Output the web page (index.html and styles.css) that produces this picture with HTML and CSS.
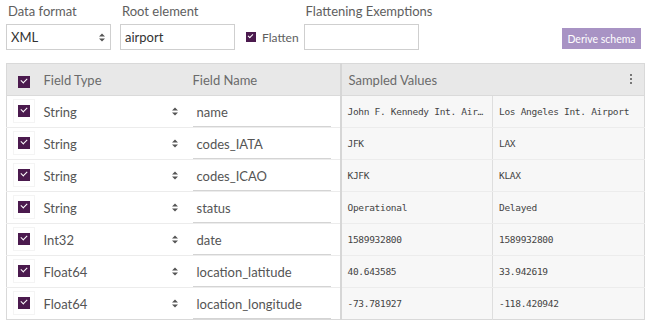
FILE: index.html
```html
<!DOCTYPE html>
<html lang="en">
<head>
    <meta charset="UTF-8">
    <title>Schema</title>
    <link rel="stylesheet" href="styles.css">
</head>
<body>
    <div class="toolbar">
        <div class="field">
            <label>Data format</label>
            <div class="select-box">
                <span>XML</span>
                <svg class="arrows" width="6" height="9" viewBox="0 0 6 9"><path d="M0 3.5L3 0.5L6 3.5Z M0 5.5L3 8.5L6 5.5Z" fill="#555"/></svg>
            </div>
        </div>
        <div class="field">
            <label>Root element</label>
            <div class="text-box">airport</div>
        </div>
        <div class="flatten">
            <span class="cb small"></span>
            <span>Flatten</span>
        </div>
        <div class="field">
            <label>Flattening Exemptions</label>
            <div class="text-box"></div>
        </div>
        <button class="derive-btn">Derive schema</button>
    </div>

    <table class="schema">
        <colgroup>
            <col class="c-check">
            <col class="c-type">
            <col class="c-name">
            <col class="c-sample">
            <col class="c-sample">
        </colgroup>
        <thead>
            <tr>
                <th class="check"><span class="cb"></span></th>
                <th>Field Type</th>
                <th>Field Name</th>
                <th colspan="2" class="samples-head">Sampled Values<span class="kebab"><i></i><i></i><i></i></span></th>
            </tr>
        </thead>
        <tbody id="rows"></tbody>
    </table>

    <script>
        var fields = [
            ['String', 'name', 'John F. Kennedy Int. Air\u2026', 'Los Angeles Int. Airport'],
            ['String', 'codes_IATA', 'JFK', 'LAX'],
            ['String', 'codes_ICAO', 'KJFK', 'KLAX'],
            ['String', 'status', 'Operational', 'Delayed'],
            ['Int32', 'date', '1589932800', '1589932800'],
            ['Float64', 'location_latitude', '40.643585', '33.942619'],
            ['Float64', 'location_longitude', '-73.781927', '-118.420942']
        ];
        var arrows = '<svg class="arrows" width="6" height="9" viewBox="0 0 6 9"><path d="M0 3.5L3 0.5L6 3.5Z M0 5.5L3 8.5L6 5.5Z" fill="#555"/></svg>';
        var html = '';
        fields.forEach(function(f) {
            html += '<tr>' +
                '<td class="check"><span class="cb-wrap"><span class="cb"></span></span></td>' +
                '<td class="type"><div class="type-sel"><span>' + f[0] + '</span>' + arrows + '</div></td>' +
                '<td class="name"><div class="name-input">' + f[1] + '</div></td>' +
                '<td class="sample first">' + f[2] + '</td>' +
                '<td class="sample">' + f[3] + '</td>' +
                '</tr>';
        });
        document.getElementById('rows').innerHTML = html;
    </script>
</body>
</html>
```

FILE: styles.css
```css
* {
    margin: 0;
    padding: 0;
    box-sizing: border-box;
}

body {
    font-family: Lato, 'Open Sans', sans-serif;
    font-size: 13px;
    color: #555;
    background: #fff;
    padding: 4px 6px 0 6px;
}

.toolbar {
    display: flex;
    align-items: flex-end;
    height: 46px;
}

.field label {
    display: block;
    color: #5e5e5e;
    margin: 0 0 5px 2px;
    line-height: 15px;
}

.select-box {
    width: 105px;
    height: 26px;
    border: 1px solid #cfcfcf;
    display: flex;
    align-items: center;
    justify-content: space-between;
    padding: 0 5px 0 4px;
    color: #333;
    margin-right: 9px;
}

.text-box {
    width: 115px;
    height: 26px;
    border: 1px solid #cfcfcf;
    padding: 0 0 0 4px;
    line-height: 24px;
    color: #333;
}

.flatten {
    display: flex;
    align-items: center;
    height: 26px;
    margin: 0 5px 0 11px;
    color: #5e5e5e;
    font-size: 12px;
}

.flatten .cb {
    margin-right: 6px;
}

.derive-btn {
    margin-left: auto;
    margin-right: 3px;
    margin-bottom: 1px;
    height: 21px;
    width: 79px;
    border: none;
    background: #a893c4;
    color: #fff;
    font-family: Lato, sans-serif;
    font-size: 10.5px;
}

.cb {
    display: inline-block;
    width: 12px;
    height: 12px;
    background: #4b1a4e;
    position: relative;
}

.cb.small {
    width: 10px;
    height: 10px;
}

.cb::after {
    content: '';
    position: absolute;
    left: 3px;
    top: 2px;
    width: 5px;
    height: 3px;
    border-left: 1.5px solid #fff;
    border-bottom: 1.5px solid #fff;
    transform: rotate(-45deg);
}

.cb.small::after {
    left: 2px;
    top: 2px;
    width: 4px;
    height: 2px;
}

.schema {
    margin-top: 13px;
    width: 638px;
    border-collapse: collapse;
    table-layout: fixed;
    border: 1px solid #d9d9d9;
}

.c-check { width: 30px; }
.c-type { width: 149px; }
.c-name { width: 155px; }
.c-sample { width: 152px; }

.schema th {
    background: #e8e8e8;
    height: 32px;
    font-weight: normal;
    text-align: left;
    color: #6b6b6b;
    padding: 0 0 0 7px;
    border-bottom: 1px solid #dadada;
}

.schema th.check {
    padding: 6px 0 0 11px;
}

.schema td {
    height: 32px;
    border-bottom: 1px solid #ececec;
    padding: 0;
}

.schema tbody tr:last-child td {
    border-bottom: none;
}

.samples-head {
    border-left: 2px solid #d6d6d6;
    position: relative;
}

.kebab {
    position: absolute;
    right: 12px;
    top: 10px;
    display: flex;
    flex-direction: column;
    gap: 2px;
}

.kebab i {
    width: 2px;
    height: 2px;
    background: #777;
}

td.check {
    padding: 0 0 0 6px;
}

.cb-wrap {
    display: flex;
    align-items: center;
    justify-content: center;
    width: 22px;
    height: 24px;
    border: 1px solid #f4f4f4;
    margin-top: -2px;
}

.type-sel {
    display: flex;
    align-items: center;
    justify-content: space-between;
    padding: 0 8px 0 7px;
}

.name-input {
    width: 138px;
    margin-left: 7px;
    padding: 0 0 0 4px;
    height: 25px;
    line-height: 20px;
    border-bottom: 1px solid #d4d4d4;
    margin-top: 6px;
}

.sample {
    background: #f7f7f7;
    font-family: 'DejaVu Sans Mono', monospace;
    font-size: 9.5px;
    letter-spacing: -0.3px;
    color: #444;
    padding: 0 0 0 6px !important;
    white-space: nowrap;
    overflow: hidden;
}

.sample.first {
    border-left: 2px solid #d6d6d6;
    border-right: 1px solid #dedede;
}
```
